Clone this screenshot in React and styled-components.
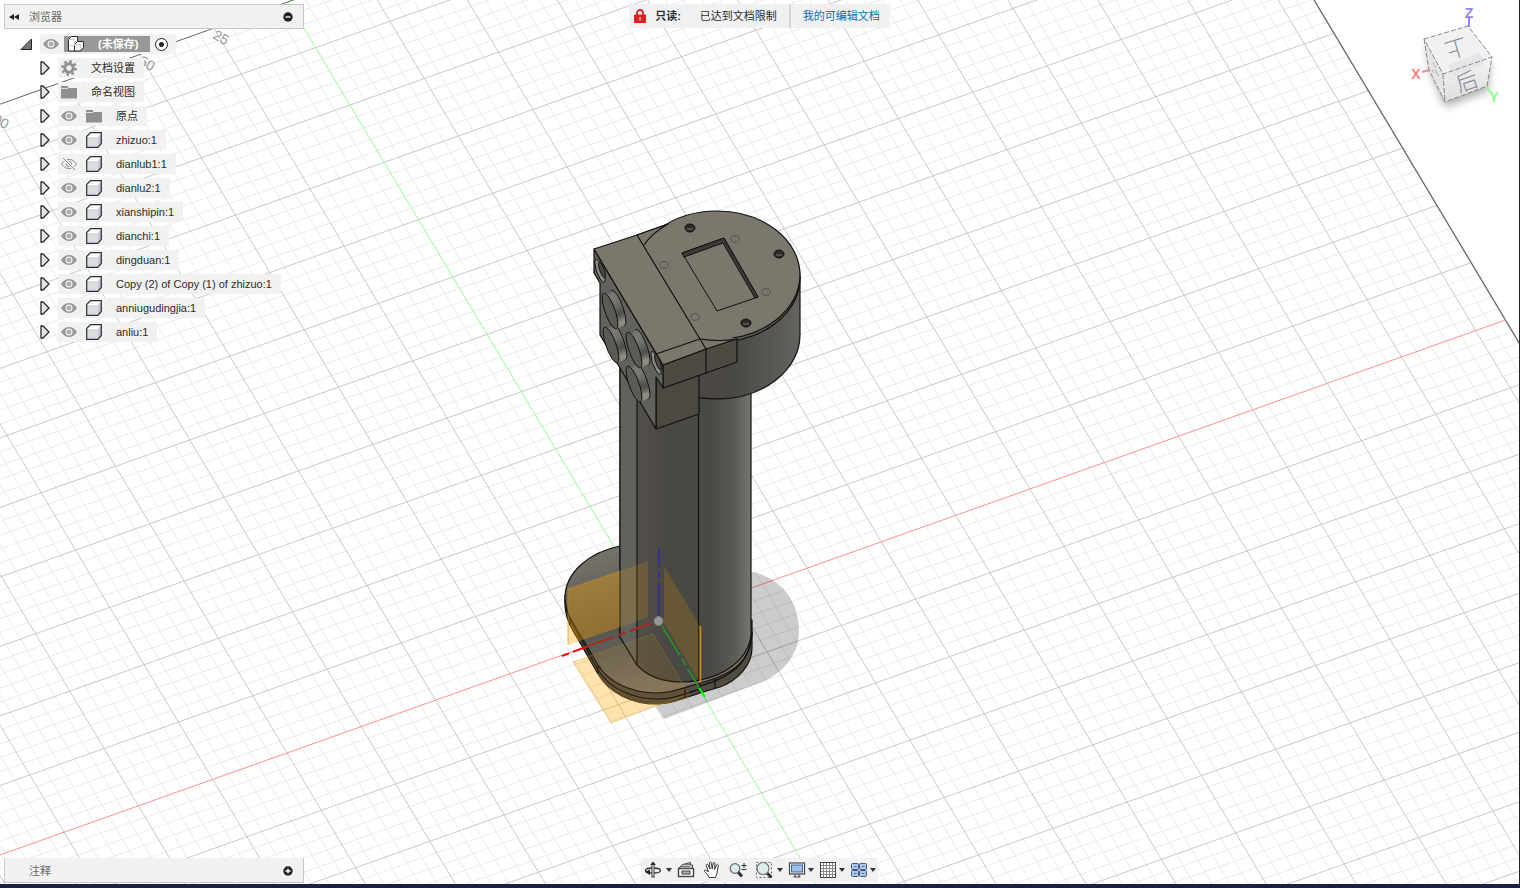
import React from 'react';
import styled, { createGlobalStyle } from 'styled-components';

const U = [14.86, -5.28];
const V = [6.857, 11.467];
const ORIGIN = [658.5, 621];
const U_MIN = -60;
const U_MAX = 57;
const V_MIN = -54;
const V_MAX = 60;

const project = (u, v) =>
  `${(ORIGIN[0] + u * U[0] + v * V[0]).toFixed(1)} ${(ORIGIN[1] + u * U[1] + v * V[1]).toFixed(1)}`;

const segment = (u1, v1, u2, v2) => `M${project(u1, v1)}L${project(u2, v2)}`;

const gridPath = (major) => {
  let d = '';
  for (let u = U_MIN; u < U_MAX; u += 1) {
    if (u !== 0 && (u % 5 === 0) === major) d += segment(u, V_MIN, u, V_MAX);
  }
  for (let v = V_MIN + 1; v <= V_MAX; v += 1) {
    if (v !== 0 && (v % 5 === 0) === major) d += segment(U_MIN, v, U_MAX, v);
  }
  return d;
};

const minorGrid = gridPath(false);
const majorGrid = gridPath(true);

const components = [
  { name: 'zhizuo:1' },
  { name: 'dianlub1:1', hidden: true },
  { name: 'dianlu2:1' },
  { name: 'xianshipin:1' },
  { name: 'dianchi:1' },
  { name: 'dingduan:1' },
  { name: 'Copy (2) of Copy (1) of zhizuo:1' },
  { name: 'anniugudingjia:1' },
  { name: 'anliu:1' },
];

const App = () => (
  <>
    <GlobalStyle />
    <Page>
      <Scene />
      <TopArea>
        <Browser />
        <Notice>
          <LockIcon />
          <NoticeTitle>只读:</NoticeTitle>
          <NoticeText>已达到文档限制</NoticeText>
          <NoticeLink href="#documents">我的可编辑文档</NoticeLink>
        </Notice>
        <CubeArea>
          <ViewCube />
        </CubeArea>
      </TopArea>
      <BottomArea>
        <CommentsBar>
          <PanelTitle>注释</PanelTitle>
          <PanelButton aria-label="展开注释">
            <RoundSign plus />
          </PanelButton>
        </CommentsBar>
        <NavBar />
      </BottomArea>
    </Page>
  </>
);

export default App;

const Browser = () => (
  <BrowserColumn>
    <BrowserHeader>
      <PanelButton aria-label="折叠浏览器">
        <svg width="10" height="8" viewBox="0 0 10 8">
          <path d="M5 1v6L0 4zM10 1v6L5 4z" fill="#222" />
        </svg>
      </PanelButton>
      <PanelTitle>浏览器</PanelTitle>
      <PanelButton aria-label="最小化">
        <RoundSign />
      </PanelButton>
    </BrowserHeader>
    <Tree>
      <TreeRow $root>
        <IconButton aria-label="折叠">
          <svg width="14" height="14" viewBox="0 0 14 14">
            <path d="M12.500 2v10.500H2z" fill="#777" stroke="#222" />
          </svg>
        </IconButton>
        <RowBody $root>
          <IconButton aria-label="可见性">
            <EyeIcon />
          </IconButton>
          <RootName>
            <AssemblyIcon />
            (未保存)
          </RootName>
          <ActiveRadio type="radio" name="active" aria-label="激活" defaultChecked />
        </RowBody>
      </TreeRow>
      <TreeItem icon={<GearIcon />} name="文档设置" />
      <TreeItem icon={<FolderIcon />} name="命名视图" />
      <TreeItem icon={<FolderIcon />} name="原点" eye />
      {components.map(({ name, hidden }) => (
        <TreeItem key={name} icon={<BodyIcon />} name={name} eye hidden={hidden} />
      ))}
    </Tree>
  </BrowserColumn>
);

const TreeItem = ({ icon, name, eye, hidden }) => (
  <TreeRow>
    <IconButton aria-label="展开">
      <svg width="10" height="14" viewBox="0 0 10 14">
        <path d="M1 1h2l6 6-6 6H1z" fill="#e6e6e6" stroke="#2b2b2b" strokeWidth="1.300" />
      </svg>
    </IconButton>
    <RowBody>
      {eye && (
        <IconButton aria-label="可见性">{hidden ? <HiddenIcon /> : <EyeIcon />}</IconButton>
      )}
      {icon}
      <RowName>{name}</RowName>
    </RowBody>
  </TreeRow>
);

const RoundSign = ({ plus }) => (
  <svg width="10" height="10" viewBox="0 0 10 10">
    <circle cx="5" cy="5" r="4.700" fill="#222" />
    <path d={plus ? 'M2.500 5h5M5 2.500v5' : 'M2.500 5h5'} stroke="#fff" strokeWidth="1.300" />
  </svg>
);

const LockIcon = () => (
  <svg width="12" height="14" viewBox="0 0 12 14">
    <path d="M3 6.500V4a3 3 0 0 1 6 0v2.500" fill="none" stroke="#e02020" strokeWidth="1.800" />
    <rect y="5.500" width="12" height="8.500" rx=".5" fill="#e02020" />
    <path d="M6 8v3.500" stroke="#fbb" strokeWidth="1.500" />
  </svg>
);

const EyeIcon = () => (
  <svg width="16" height="16" viewBox="0 0 16 16">
    <path d="M0 8c2-3.600 5-5 8-5s6 1.400 8 5c-2 3.600-5 5-8 5S2 11.600 0 8z" fill="#999" />
    <circle cx="8" cy="8" r="2.900" fill="#aaa" stroke="#eee" strokeWidth="1.200" />
  </svg>
);

const HiddenIcon = () => (
  <svg width="16" height="16" viewBox="0 0 16 16" fill="none" stroke="#8a8a8a">
    <path d="M.5 8C3 4.500 5.500 3.500 8 3.500s5 1 7.500 4.500c-2.500 3.500-5 4.500-7.500 4.500S3 11.500.5 8z" />
    <circle cx="8" cy="8" r="2.500" />
    <path d="M2 2l12 12" stroke="#f1f1f1" strokeWidth="3" />
    <path d="M2 2l12 12" />
  </svg>
);

const GearIcon = () => (
  <svg width="16" height="16" viewBox="0 0 16 16" fill="none" stroke="#909090">
    <circle cx="8" cy="8" r="4.200" strokeWidth="3" />
    <circle cx="8" cy="8" r="6.600" strokeWidth="2.600" strokeDasharray="2.600 2.584" />
  </svg>
);

const FolderIcon = () => (
  <svg width="16" height="14" viewBox="0 0 16 14">
    <path d="M0 1h7v2h9v10.500H0z" fill="#909090" />
    <path d="M0 3.500h7l1.500-1.500" fill="none" stroke="#ddd" />
  </svg>
);

const BodyIcon = () => (
  <svg width="16" height="16" viewBox="0 0 16 16">
    <path d="M.7 4.500L4.500.7h10.800v10.800l-3.500 3.800H.7z" fill="#fff" />
    <path d="M1 5h11v10H1z" fill="#dadce3" />
    <path d="M12 5l3.300-4v10.500L12 15z" fill="#c6c8d0" />
    <path
      d="M.7 4.500L4.500.7h10.800v10.800l-3.500 3.800H.7z"
      fill="none"
      stroke="#2d2d30"
      strokeWidth="1.200"
    />
  </svg>
);

const AssemblyIcon = () => (
  <svg width="16" height="16" viewBox="0 0 16 16" stroke="#2d2d30">
    <path d="M.5 3.500L3.500.5h6v5l-3 9.500h-6z" fill="#fff" />
    <path d="M6.500 8.500L9.500 5.500h6v6l-3 3.500h-6z" fill="#f4f4f6" />
    <path d="M1.500 9.500h5M1 3.500h5.500V9M7 8.500h5.500V14" fill="none" stroke="#ccc" />
  </svg>
);

const ViewCube = () => (
  <svg width="96" height="112" viewBox="1408 4 96 112" role="img" aria-label="ViewCube">
    <defs>
      <filter id="cubeShadow" x="-30%" y="-30%" width="160%" height="160%">
        <feGaussianBlur stdDeviation="4" />
      </filter>
      <linearGradient id="cubeFront" x1="0" y1="0" x2="0" y2="1">
        <stop offset="0" stopColor="#f3f3f3" />
        <stop offset="1" stopColor="#dedede" />
      </linearGradient>
    </defs>
    <path
      d="M1426 46L1432 76 1445 107 1488 91 1490 62z"
      fill="#777"
      opacity=".6"
      filter="url(#cubeShadow)"
    />
    <path d="M1469 27V18" stroke="#8888ff" strokeWidth="2" />
    <path d="M1422 72l8-2" stroke="#ff8888" strokeWidth="2" />
    <path d="M1486 86l6 8" stroke="#88ff88" strokeWidth="2" />
    <path d="M1424 39L1443 74 1445 102 1429 70z" fill="#e4e4e4" />
    <path d="M1443 74L1492 57 1487 86 1445 102z" fill="url(#cubeFront)" />
    <path d="M1424 39L1468 26 1492 57 1443 74z" fill="#f1f1f1" />
    <path d="M1448 65l31-12 4 6v6l-29 11z" fill="#e3e5e8" />
    <path
      d="M1424 39L1468 26 1492 57 1443 74zL1429 70 1445 102 1487 86 1492 57M1443 74L1445 102"
      fill="none"
      stroke="#888"
      strokeDasharray="5 2"
    />
    <CubeFace x="1456" y="48" transform="rotate(163 1456 48)">上</CubeFace>
    <CubeFace x="1467" y="82" transform="rotate(-19 1467 82)">后</CubeFace>
    <path d="M1433 63l3 4M1435 70l4 6M1432 70l2 3" stroke="#999" strokeDasharray="2 1" />
    <AxisName x="1469" y="18" fill="#8888ff">Z</AxisName>
    <AxisName x="1416" y="79" fill="#ff8080">X</AxisName>
    <AxisName x="1494" y="102" fill="#88ff88">Y</AxisName>
  </svg>
);

const OrbitIcon = () => (
  <svg width="18" height="18" viewBox="0 0 18 18" fill="none" stroke="#333">
    <ellipse cx="9" cy="9.500" rx="7.500" ry="2.500" strokeWidth="1.300" />
    <path d="M9 16.500V3" strokeWidth="3" />
    <path d="M9 15.500V4" stroke="#fff" />
    <path d="M9 .5L6 4h6z" fill="#333" stroke="none" />
    <path d="M1 11l5-2.500V14z" fill="#222" stroke="none" />
  </svg>
);

const LookAtIcon = () => (
  <svg width="18" height="18" viewBox="0 0 18 18" fill="none" stroke="#444">
    <path d="M2 7l3.500-3.500 8-2V4l2 0V7" fill="#ccc" />
    <path d="M4 5.500h9M7 3.500h6" stroke="#777" />
    <rect x="1.500" y="7.500" width="15" height="8" fill="#fafafa" strokeWidth="1.400" />
    <rect x="5" y="10" width="8" height="3" fill="#aab4c0" />
  </svg>
);

const HandIcon = () => (
  <svg width="18" height="18" viewBox="0 0 18 18">
    <path
      d="M6 16.500C5 14 3 12 1.500 10.500c-.8-1 .6-2 1.700-1.200L5.500 11 3.300 4.500c-.3-1.300 1.300-1.700 1.800-.6L7 8 6.500 2.200C6.500.8 8.200.8 8.500 2.200L9.200 8l1-5.800c.3-1.300 1.900-1 1.800.3L11.600 8.500l2-4.500c.6-1.100 2-.6 1.700.6-.5 2.400-.8 4.900-1.300 7.400-.3 1.500-1 2.500-1.500 4.500z"
      fill="#fff"
      stroke="#333"
    />
  </svg>
);

const ZoomIcon = () => (
  <svg width="18" height="18" viewBox="0 0 18 18" fill="none" stroke="#333">
    <path d="M9 11l4 4.500" strokeWidth="3" />
    <circle cx="6" cy="7.500" r="4.800" fill="#d9edf0" stroke="#666" strokeWidth="1.200" />
    <path d="M12.500 4.500h5M15 2v5M12.500 8.500h5" />
  </svg>
);

const FitIcon = () => (
  <svg width="18" height="18" viewBox="0 0 18 18" fill="none" stroke="#333">
    <rect x="1.500" y="1.500" width="15" height="15" strokeDasharray="2 2" stroke="#666" />
    <path d="M12 12l4.500 4.500" strokeWidth="3" />
    <circle cx="8" cy="7.500" r="6" fill="#dcefef" stroke="#777" strokeWidth="1.200" />
  </svg>
);

const DisplayIcon = () => (
  <svg width="18" height="18" viewBox="0 0 18 18" stroke="#444">
    <rect x="1.500" y="2" width="15" height="11" fill="#fff" strokeWidth="1.200" />
    <rect x="3.500" y="4" width="11" height="7" fill="#9fc0ea" stroke="#3c62a0" />
    <path d="M7 13v2.500M11 13v2.500M5.500 16h7" fill="none" strokeWidth="1.200" />
  </svg>
);

const GridIcon = () => (
  <svg width="18" height="18" viewBox="0 0 18 18" fill="none" stroke="#888">
    <rect x="1.500" y="1.500" width="15" height="15" fill="#fff" stroke="#444" />
    <path d="M4.500 2v14M7.500 2v14M10.500 2v14M13.500 2v14M2 4.500h14M2 7.500h14M2 10.500h14M2 13.500h14" />
  </svg>
);

const ViewportsIcon = () => (
  <svg width="18" height="18" viewBox="0 0 18 18" fill="#a9c6ee" stroke="#44597c">
    <rect x="1.500" y="2.500" width="7" height="6" rx="1" />
    <rect x="9.500" y="2.500" width="7" height="6" rx="1" />
    <rect x="1.500" y="9.500" width="7" height="6" rx="1" />
    <rect x="9.500" y="9.500" width="7" height="6" rx="1" />
    <path d="M4 5.500h2.500M12 5.500h2.500M4 12.500h2.500M12 12.500h2.500" strokeWidth=".8" />
  </svg>
);

const NavBar = () => (
  <NavTools aria-label="导航">
    <NavButton aria-label="动态观察" $menu $wide>
      <OrbitIcon />
      <Caret />
    </NavButton>
    <NavButton aria-label="观察方向">
      <LookAtIcon />
    </NavButton>
    <NavButton aria-label="平移">
      <HandIcon />
    </NavButton>
    <NavButton aria-label="缩放">
      <ZoomIcon />
    </NavButton>
    <NavButton aria-label="适合屏幕" $menu $wide>
      <FitIcon />
      <Caret />
    </NavButton>
    <NavButton aria-label="显示设置" $menu>
      <DisplayIcon />
      <Caret />
    </NavButton>
    <NavButton aria-label="栅格和捕捉" $menu>
      <GridIcon />
      <Caret />
    </NavButton>
    <NavButton aria-label="视口" $menu>
      <ViewportsIcon />
      <Caret />
    </NavButton>
  </NavTools>
);

// a disc lying in the v/z plane, pushed out along the red axis
const PushButton = ({ x, y }) => (
  <g>
    {[8, 7, 6, 5, 4, 3, 2, 1, 0].map((n) => (
      <circle
        key={n}
        r="1.150"
        transform={`matrix(6.857 11.467 0 -10.400 ${x + n} ${y - n * 0.36})`}
        fill={n === 0 ? '#5b5a54' : 'url(#knob)'}
        stroke={n === 0 || n === 8 ? '#111' : 'none'}
        vectorEffect="non-scaling-stroke"
      />
    ))}
  </g>
);

const ScrewHole = ({ x, y }) => (
  <g stroke="#111">
    <circle
      r=".75"
      transform={`matrix(6.857 11.467 0 -10.400 ${x} ${y})`}
      fill="#8b8a82"
      vectorEffect="non-scaling-stroke"
    />
    <circle
      r=".5"
      transform={`matrix(6.857 11.467 0 -10.400 ${x + 2} ${y - 1})`}
      fill="#4b4a45"
      vectorEffect="non-scaling-stroke"
    />
  </g>
);

const Scene = () => (
  <Canvas viewBox="0 0 1519 884" preserveAspectRatio="xMidYMid slice" aria-hidden="true">
    <defs>
      <linearGradient id="column" x1="0" x2="1">
        <stop offset="0" stopColor="#56544d" />
        <stop offset=".35" stopColor="#4a4842" />
        <stop offset=".7" stopColor="#4a4943" />
        <stop offset=".88" stopColor="#5d5b55" />
        <stop offset="1" stopColor="#77766f" />
      </linearGradient>
      <linearGradient id="drum" x1="0" x2="1">
        <stop offset="0" stopColor="#4e4a44" />
        <stop offset=".6" stopColor="#4a4843" />
        <stop offset="1" stopColor="#65635d" />
      </linearGradient>
      <linearGradient id="knob" x1="0" y1="0" x2="0" y2="1">
        <stop offset="0" stopColor="#77756d" />
        <stop offset=".5" stopColor="#918f86" />
        <stop offset=".75" stopColor="#4a4944" />
        <stop offset="1" stopColor="#85847c" />
      </linearGradient>
      <linearGradient id="base" x1="0" y1="0" x2=".4" y2="1">
        <stop offset="0" stopColor="#7b796f" />
        <stop offset=".55" stopColor="#565550" />
        <stop offset="1" stopColor="#7b7365" />
      </linearGradient>
    </defs>

    <g fill="none">
      <path d={minorGrid} stroke="#ebebeb" />
      <path d={majorGrid} stroke="#c9c9c9" />
      <path d={segment(U_MIN, V_MIN, U_MAX, V_MIN)} stroke="#666" />
      <path d={segment(U_MAX, V_MIN, U_MAX, V_MAX)} stroke="#666" strokeWidth="1.300" />
      <path d={segment(U_MIN, 0, U_MAX, 0)} stroke="#ff9090" />
      <path d={segment(0, V_MIN, 0, V_MAX)} stroke="#90ff90" />
    </g>
    <GridLabel x="212" y="38" transform="rotate(28 212 38)">25</GridLabel>
    <GridLabel x="138" y="64" transform="rotate(28 138 64)">50</GridLabel>
    <GridLabel x="-8" y="122" transform="rotate(28 -8 122)">00</GridLabel>

    <path
      d="M751 572C780 576 799 602 799 631C799 655 783 673 762 682L664 719 656 707 720 650z"
      opacity=".2"
    />
    <path d="M573 662L653 634 689 694 611 723z" fill="#ffa500" opacity=".26" />

    <g stroke="#111" strokeWidth="1.200" strokeLinejoin="round">
      <path
        d="M565 595V606Q566 618 572 629L598 674C609 693 632 704 657 704C672 703 682 699 700 693L720 687C739 680 752 664 752 648V620L700 600z"
        fill="#514b40"
      />
      <path
        d="M565 600Q566 612 572 623L598 670C609 688 632 699 657 699C672 699 682 695 700 689"
        fill="none"
      />
      <path
        d="M620 546C590 552 565 572 565 598Q565 609 572 621L598 665C609 683 632 693 657 693C672 693 682 688 700 683C735 674 751 660 752 632L690 560z"
        fill="url(#base)"
      />
      <path d="M598 665v8M685 688v10M700 683v10M715 678v10M570 618v7" fill="none" />
      <path
        d="M620 350V637L637 665C648 677 664 682 682 682C719 681 748 662 751 635V380z"
        fill="url(#column)"
      />
      <path d="M620 350H637V665L620 637z" fill="#62625c" />
      <path d="M698.500 400V681" />
      <path d="M752 632C751 660 735 676 700 686" fill="none" />

      <path d="M634 276V335A83 64 0 0 0 800 335V276z" fill="url(#drum)" />
      <ellipse cx="717" cy="278" rx="83" ry="64" fill="#57554f" />
      <path d="M637 235L668 224 720 220 730 341 706 349z" fill="#7b776c" />
      <ellipse cx="717" cy="275" rx="83" ry="64" fill="#7b776c" />
      <path d="M637 235L668 224 690 240 690 325 737 339 706 349z" fill="#7b776c" stroke="none" />
      <path d="M637 235L668 224Q652 233 644 245M700 339Q720 342 737 339" fill="none" />
      <path d="M656 429V370L699 356V414z" fill="#4c4842" />
      <path d="M663 365L706 349 737 339V362L706 373 663 388z" fill="#4d4943" />
      <path
        d="M594 249L663 365V388L656 377V429L620 368 600 335V283L594 273z"
        fill="#62615b"
      />
      <path d="M594 249L637 235 706 349 663 365z" fill="#7b776c" />
      <path d="M656 354L700 339M706 349V373" fill="none" />
    </g>

    <ScrewHole x={600} y={271} />
    <PushButton x={611} y={345} />
    <PushButton x={610} y={311} />
    <PushButton x={634} y={384} />
    <PushButton x={634} y={350} />
    <ScrewHole x={656} y={363} />

    <path d="M682 253L724 238 758 297 717 311z" fill="#7b776c" stroke="#111" />
    <path d="M682 253L724 238 758 297 755 298 723 243 684 257z" fill="#3c3a36" stroke="#111" />
    {[[690, 228], [779, 254], [746, 323]].map(([x, y]) => (
      <g key={x}>
        <ellipse cx={x} cy={y} rx="5" ry="4" fill="#2b2a27" stroke="#111" />
        <path d={`M${x - 3} ${y + 1}h6`} stroke="#77746b" />
      </g>
    ))}
    {[[735, 239], [664, 265], [766, 292], [695, 317]].map(([x, y]) => (
      <ellipse key={x} cx={x} cy={y} rx="4.200" ry="3.300" fill="none" stroke="#55524a" />
    ))}

    <g fill="#ffa500">
      <path d="M568 589L620 571V627L568 645z" opacity=".35" />
      <path d="M620 571L648 561V617L620 627z" opacity=".16" />
      <path d="M573 662L653 634 689 694 611 723z" opacity=".09" />
      <path d="M664 566L700 626V683L664 623z" opacity=".16" />
    </g>
    <g fill="none" stroke="#c98a20">
      <path d="M568 645V589L620 571" opacity=".6" />
      <path d="M573 662L653 634 689 694 611 723z" opacity=".3" />
      <path d="M598 674C609 693 632 704 657 704C672 703 682 699 689 697" opacity=".6" />
      <path d="M700.500 626V683" strokeWidth="1.500" />
    </g>
    <g fill="none" strokeWidth="2">
      <path d="M659 548V616" stroke="#37318a" strokeDasharray="19 4 8 4 40" />
      <path d="M652 623L586 647" stroke="#a02c25" strokeDasharray="24 4 8 4 40" />
      <path d="M586 647L562 656" stroke="#f00" strokeDasharray="14 4 8" />
      <path d="M662 626L699 687" stroke="#2a8a2a" strokeDasharray="34 4 8 4 40" />
      <path d="M699 688L705 697" stroke="#0f0" />
    </g>
    <circle cx="658.500" cy="621" r="4.500" fill="#999" stroke="#777" />
  </Canvas>
);

const GlobalStyle = createGlobalStyle`
  * {
    box-sizing: border-box;
  }

  body {
    margin: 0;
    background: #fff;
    color: #2b2b2b;
    font: 11px/16px 'Liberation Sans', 'Noto Sans CJK SC', sans-serif;
  }

  button {
    border: 0;
    padding: 0;
    background: none;
    color: inherit;
    font: inherit;
    cursor: pointer;
  }

  svg {
    flex: none;
    display: block;
  }
`;

const Page = styled.div`
  position: relative;
  min-height: 100vh;
  display: flex;
  flex-direction: column;
  justify-content: space-between;
  overflow: hidden;
  border-right: 1px solid #222;
  border-bottom: 4px solid #1c2143;
`;

const Canvas = styled.svg`
  position: absolute;
  inset: 0;
  width: 100%;
  height: 100%;
`;

const GridLabel = styled.text`
  font-size: 14px;
  fill: #999;
`;

const TopArea = styled.div`
  position: relative;
  display: grid;
  grid-template-columns: 1fr auto 1fr;
  align-items: start;
  padding: 4px 4px 0;
`;

const BottomArea = styled.div`
  position: relative;
  display: grid;
  grid-template-columns: 1fr auto 1fr;
  align-items: start;
  padding: 0 4px 1px;
`;

const BrowserColumn = styled.aside`
  width: 300px;
`;

const Panel = styled.div`
  display: flex;
  align-items: center;
  width: 300px;
  height: 25px;
  border: 1px solid #c8c8c8;
  background: #f1f1f1;
`;

const BrowserHeader = styled(Panel)`
  gap: 10px;
  padding: 0 10px 0 4px;
`;

const CommentsBar = styled(Panel)`
  border-top: 0;
  padding: 1px 10px 0 24px;
`;

const PanelTitle = styled.span`
  flex: 1;
  color: #666;
`;

const PanelButton = styled.button`
  display: flex;
`;

const Tree = styled.ul`
  display: flex;
  flex-direction: column;
  gap: 4px;
  margin: 5px 0 0;
  padding: 0;
  list-style: none;
`;

const TreeRow = styled.li`
  display: flex;
  align-items: center;
  gap: ${({ $root }) => ($root ? 7 : 8)}px;
  height: 20px;
  padding-left: ${({ $root }) => ($root ? 15 : 36)}px;
`;

const RowBody = styled.div`
  display: flex;
  align-items: center;
  gap: ${({ $root }) => ($root ? 5 : 9)}px;
  height: 20px;
  padding: ${({ $root }) => ($root ? '0 8px 0 3px' : '0 9px 0 3px')};
  background: #f1f1f1;
`;

const IconButton = styled.button`
  display: flex;
`;

const RowName = styled.span`
  padding-left: 5px;
  white-space: nowrap;
`;

const RootName = styled.span`
  display: flex;
  align-items: center;
  gap: 14px;
  height: 16px;
  padding: 0 12px 0 4px;
  background: #989898;
  color: #fff;
  font-weight: bold;
`;

const ActiveRadio = styled.input`
  appearance: none;
  width: 13px;
  height: 13px;
  margin: 0;
  border: 1px solid #222;
  border-radius: 50%;
  background: radial-gradient(circle, #222 0 2px, #fff 3px);
`;

const Notice = styled.div`
  display: flex;
  align-items: center;
  height: 24px;
  padding-left: 5px;
  background: #f1f1f1;
`;

const NoticeTitle = styled.strong`
  padding: 0 19px 0 9px;
`;

const NoticeText = styled.span`
  padding-right: 12px;
`;

const NoticeLink = styled.a`
  padding: 4px 10px 4px 12px;
  border-left: 2px solid #d6d6d6;
  color: #0070b8;
  text-decoration: none;
`;

const CubeArea = styled.div`
  display: flex;
  justify-content: flex-end;
  padding-right: 11px;
`;

const CubeFace = styled.text`
  font-size: 22px;
  font-weight: 300;
  text-anchor: middle;
  dominant-baseline: central;
  fill: #858990;
`;

const AxisName = styled.text`
  font-size: 14px;
  font-weight: bold;
  text-anchor: middle;
`;

const NavTools = styled.nav`
  display: flex;
  align-items: center;
  height: 24px;
  padding: 0 2px 0 3px;
  background: #f1f1f1;
`;

const NavButton = styled.button`
  display: flex;
  align-items: center;
  gap: ${({ $wide }) => ($wide ? 4 : 2)}px;
  margin-right: ${({ $menu }) => ($menu ? 5 : 8)}px;

  &:last-child {
    margin-right: 0;
  }
`;

const Caret = styled.span`
  border: 3px solid transparent;
  border-top: 4px solid #333;
  border-bottom: 0;
`;
